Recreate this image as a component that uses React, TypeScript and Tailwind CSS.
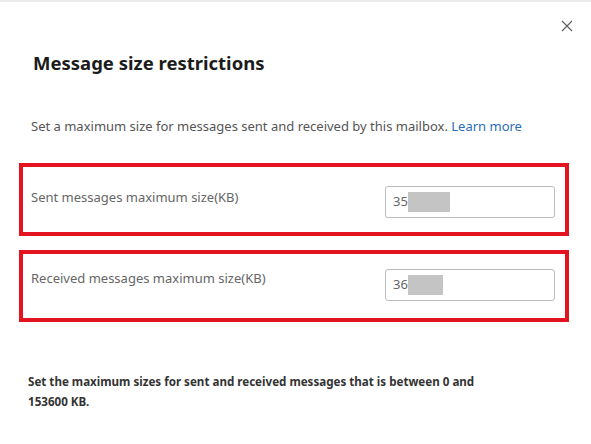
export default function App() {
  const font = { fontFamily: '"Noto Sans", "Open Sans", sans-serif' }
  return (
    <div className="relative w-[591px] h-[444px] bg-white border-t-2 border-[#ececec] overflow-hidden" style={font}>
      {/* close */}
      <button className="absolute top-[17px] right-[17px] w-[14px] h-[14px] flex items-center justify-center text-[#616161]">
        <svg width="12" height="12" viewBox="0 0 12 12" fill="none" stroke="currentColor" strokeWidth="1.2">
          <path d="M1 1L11 11M11 1L1 11" />
        </svg>
      </button>

      <div className="pl-[33px] pt-[48px]">
        <h2 className="text-[18.5px] leading-[26px] font-bold text-[#1b1b1b] m-0">Message size restrictions</h2>
      </div>

      <p className="pl-[31px] mt-[41px] text-[13px] leading-[18px] text-[#555]">
        Set a maximum size for messages sent and received by this mailbox.{' '}
        <span className="text-[#2b6cb8]">Learn more</span>
      </p>

      <div className="ml-[19px] w-[550px] mt-[28px] flex flex-col gap-[14px]">
        {/* sent */}
        <div className="h-[73px] border-4 border-[#e3141f] flex items-start pl-[8px] pr-[10px]">
          <div className="mt-[22px] flex-1 text-[13px] leading-[16px] text-[#666]">Sent messages maximum size(KB)</div>
          <div className="mt-[19px] w-[170px] h-[32px] border border-[#bcbcbc] rounded-[3px] flex items-center pl-[7px] text-[13px] text-[#666]">
            35
            <span className="inline-block w-[42px] h-[20px] bg-[#c4c4c4]" />
          </div>
        </div>
        {/* received */}
        <div className="h-[72px] border-4 border-[#e3141f] flex items-start pl-[8px] pr-[10px]">
          <div className="mt-[16px] flex-1 text-[13px] leading-[16px] text-[#666]">Received messages maximum size(KB)</div>
          <div className="mt-[15px] w-[170px] h-[32px] border border-[#bcbcbc] rounded-[3px] flex items-center pl-[7px] text-[13px] text-[#666]">
            36
            <span className="inline-block w-[35px] h-[20px] bg-[#c4c4c4]" />
          </div>
        </div>
      </div>

      <p className="pl-[28px] pr-[100px] mt-[50px] text-[11.6px] leading-[20px] font-bold text-[#333]">
        Set the maximum sizes for sent and received messages that is between 0 and 153600 KB.
      </p>
    </div>
  )
}
